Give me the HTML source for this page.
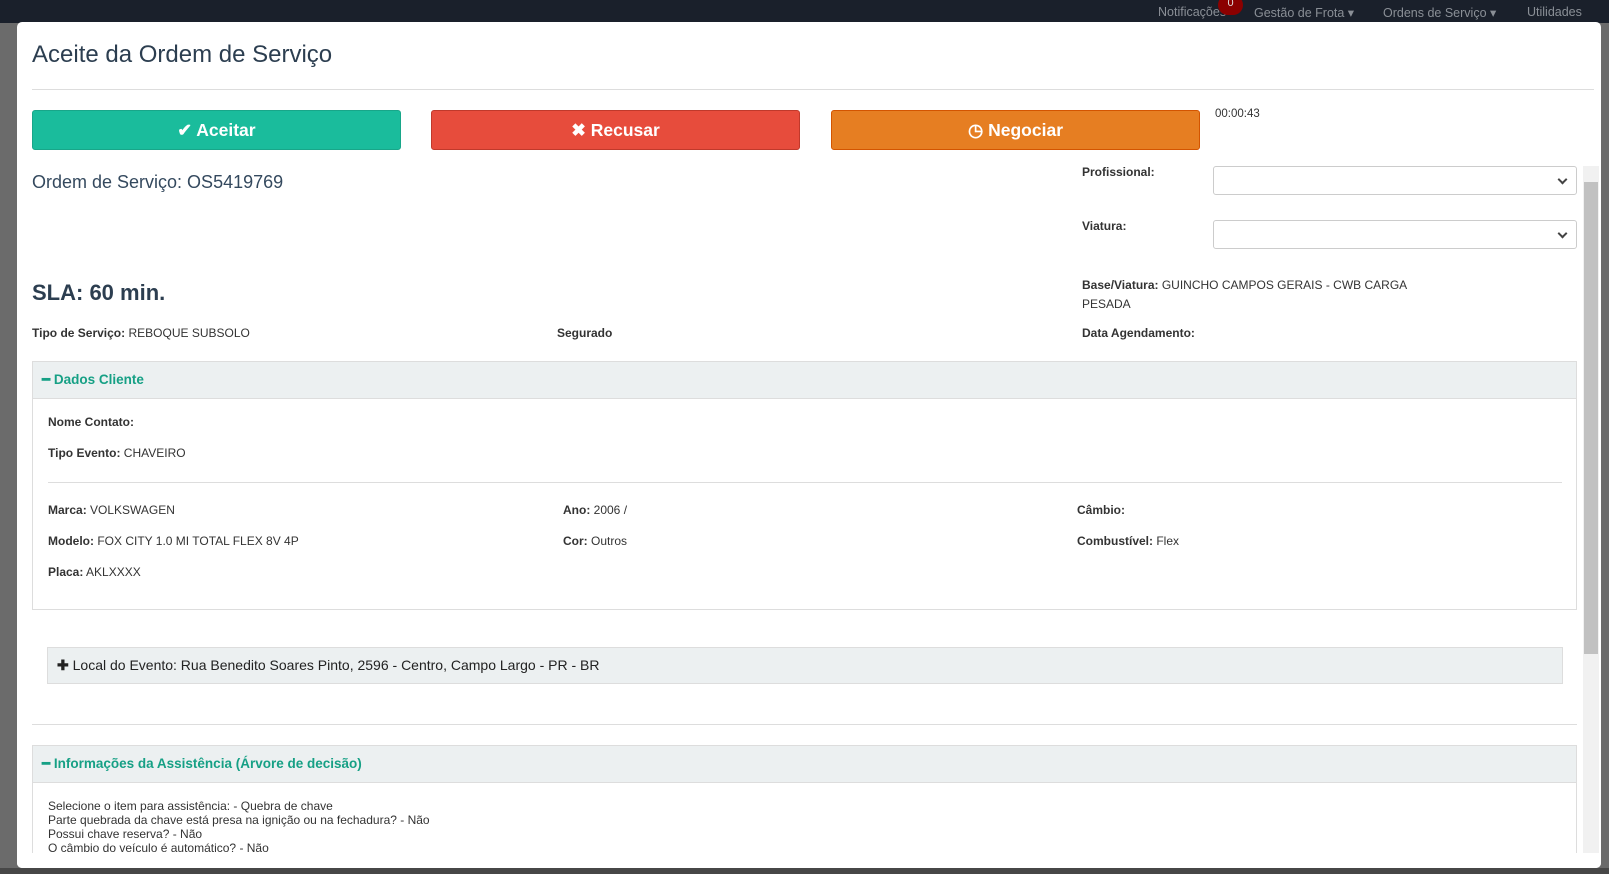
<!DOCTYPE html>
<html><head><meta charset="utf-8"><style>
*{box-sizing:border-box;margin:0;padding:0}
body{width:1609px;height:874px;overflow:hidden;background:#6b6b6b;font-family:"Liberation Sans",Arial,sans-serif;color:#333;position:relative;font-size:12px}
.top{position:absolute;left:0;top:0;width:1609px;height:23px;background:#1a202b}
.nav{position:absolute;top:5px;color:#8a8f96;font-size:12.5px}
.badge{position:absolute;left:1218px;top:-5px;width:25px;height:20px;border-radius:10px;background:#8b0000;color:#ddd;font-size:11px;text-align:center;line-height:16px}
.modal{position:absolute;left:17px;top:22px;width:1584px;height:846px;background:#fff;border-radius:5px;overflow:hidden}
.a{position:absolute;white-space:nowrap}
.btn{position:absolute;top:88px;height:40px;width:369px;border-radius:3px;color:#fff;font-weight:bold;font-size:17.5px;text-align:center;line-height:38px}
b{font-weight:bold}
.sel{position:absolute;left:1196px;width:364px;height:29px;border:1px solid #ccc;border-radius:3px}
.sel:after{content:"";position:absolute;right:10px;top:9px;width:5px;height:5px;border-right:2px solid #444;border-bottom:2px solid #444;transform:rotate(45deg)}
.panel{position:absolute;left:15px;width:1545px;border:1px solid #ddd}
.ph{background:#ecf0f1;height:37px;border-bottom:1px solid #ddd;color:#16a085;font-weight:bold;font-size:13.5px;padding:10px 9px}
.hr{position:absolute;height:1px;background:#ddd}
</style></head><body>
<div class="top"></div>
<div class="nav" style="left:1158px">Notificações</div>
<div class="badge">0</div>
<div class="nav" style="left:1254px">Gestão de Frota ▾</div>
<div class="nav" style="left:1383px">Ordens de Serviço ▾</div>
<div class="nav" style="left:1527px">Utilidades</div>
<div style="position:absolute;left:0;top:868px;width:1609px;height:6px;background:#474747"></div>
<div class="modal">
 <div class="a" style="left:15px;top:19px;font-size:24px;color:#2c3e50">Aceite da Ordem de Serviço</div>
 <div class="hr" style="left:15px;top:67px;width:1562px"></div>
 <div class="btn" style="left:15px;background:#1abc9c;border:1px solid #18a689">✔ Aceitar</div>
 <div class="btn" style="left:414px;background:#e74c3c;border:1px solid #c0392b">✖ Recusar</div>
 <div class="btn" style="left:814px;background:#e67e22;border:1px solid #d35400">◷ Negociar</div>
 <div class="a" style="left:1198px;top:86px;font-size:11.5px">00:00:43</div>
 <div style="position:absolute;left:1566px;top:144px;width:16px;height:688px;background:#f1f1f1"><div style="position:absolute;left:1px;top:16px;width:14px;height:472px;background:#c1c1c1"></div></div>
 <div class="a" style="left:15px;top:150px;font-size:18px;color:#34495e">Ordem de Serviço: OS5419769</div>
 <div class="a" style="left:1065px;top:143px"><b>Profissional:</b></div>
 <div class="sel" style="top:144px"></div>
 <div class="a" style="left:1065px;top:197px"><b>Viatura:</b></div>
 <div class="sel" style="top:198px"></div>
 <div class="a" style="left:15px;top:258px;font-size:22px;font-weight:bold;color:#2c3e50">SLA: 60 min.</div>
 <div class="a" style="left:1065px;top:254px;line-height:18.5px"><b>Base/Viatura:</b> GUINCHO CAMPOS GERAIS - CWB CARGA<br>PESADA</div>
 <div class="a" style="left:15px;top:304px"><b>Tipo de Serviço:</b> REBOQUE SUBSOLO</div>
 <div class="a" style="left:540px;top:304px"><b>Segurado</b></div>
 <div class="a" style="left:1065px;top:304px"><b>Data Agendamento:</b></div>
 <div class="panel" style="top:339px;height:249px">
  <div class="ph">━ Dados Cliente</div>
  <div class="a" style="left:15px;top:53px"><b>Nome Contato:</b></div>
  <div class="a" style="left:15px;top:84px"><b>Tipo Evento:</b> CHAVEIRO</div>
  <div class="hr" style="left:15px;top:120px;width:1514px"></div>
  <div class="a" style="left:15px;top:141px"><b>Marca:</b> VOLKSWAGEN</div>
  <div class="a" style="left:530px;top:141px"><b>Ano:</b> 2006 /</div>
  <div class="a" style="left:1044px;top:141px"><b>Câmbio:</b></div>
  <div class="a" style="left:15px;top:172px"><b>Modelo:</b> FOX CITY 1.0 MI TOTAL FLEX 8V 4P</div>
  <div class="a" style="left:530px;top:172px"><b>Cor:</b> Outros</div>
  <div class="a" style="left:1044px;top:172px"><b>Combustível:</b> Flex</div>
  <div class="a" style="left:15px;top:203px"><b>Placa:</b> AKLXXXX</div>
 </div>
 <div style="position:absolute;left:30px;top:625px;width:1516px;height:37px;background:#ecf0f1;border:1px solid #ddd;padding:9px;font-size:14px;color:#222"><b>✚</b> Local do Evento: Rua Benedito Soares Pinto, 2596 - Centro, Campo Largo - PR - BR</div>
 <div class="hr" style="left:15px;top:702px;width:1545px"></div>
 <div class="panel" style="top:723px;height:120px;border-bottom:none">
  <div class="ph">━ Informações da Assistência (Árvore de decisão)</div>
  <div class="a" style="left:15px;top:53px;line-height:14px">Selecione o item para assistência: - Quebra de chave<br>Parte quebrada da chave está presa na ignição ou na fechadura? - Não<br>Possui chave reserva? - Não<br>O câmbio do veículo é automático? - Não</div>
 </div>
 <div style="position:absolute;left:0;top:831px;width:1584px;height:15px;background:#fff"></div>
</div>
</body></html>
